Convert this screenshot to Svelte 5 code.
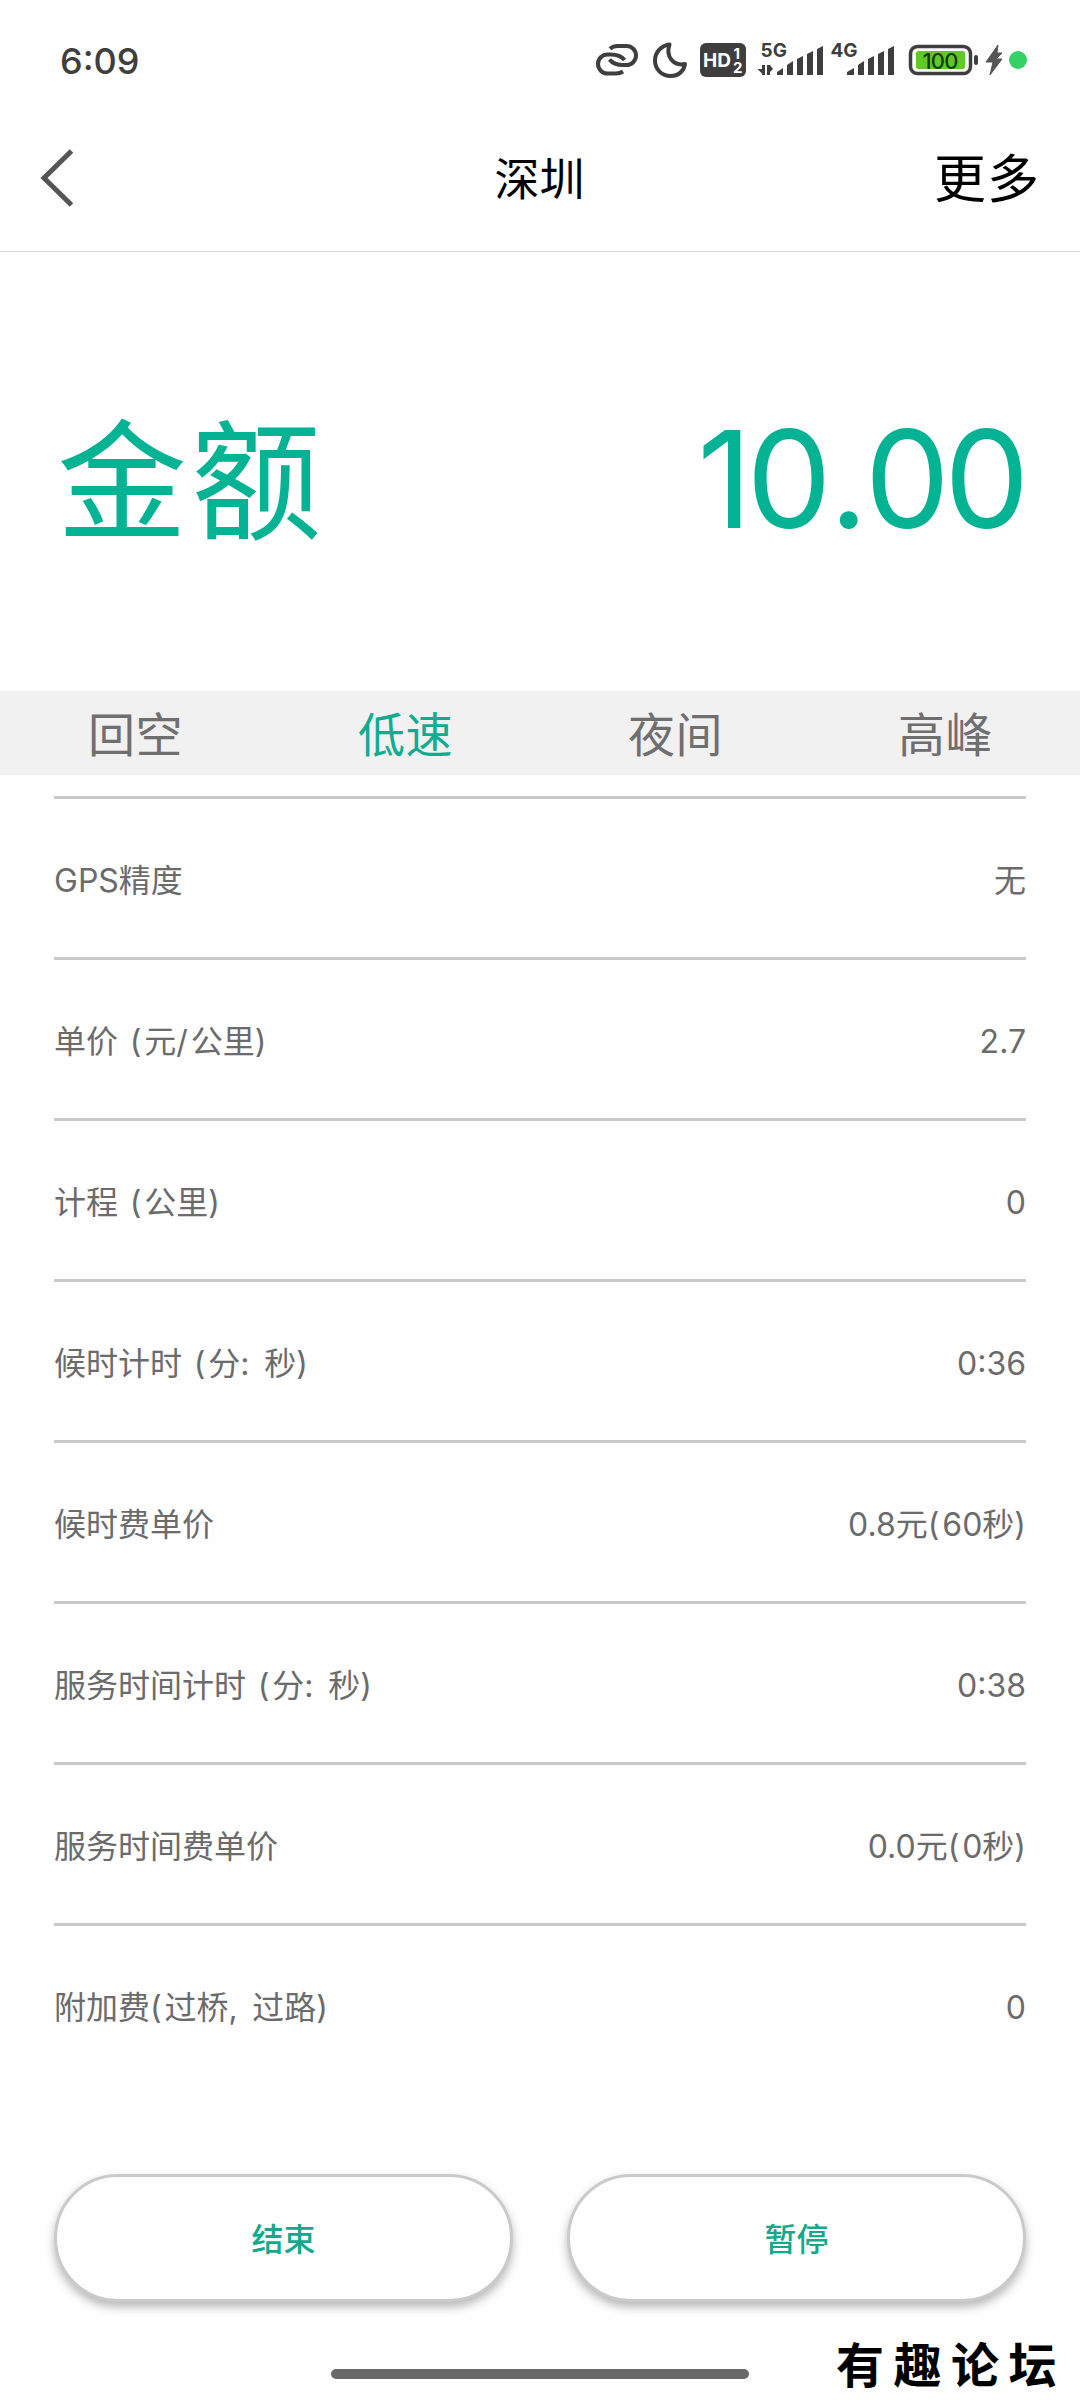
<script>
  let active = "低速";

  const tabs = ["回空", "低速", "夜间", "高峰"];

  const rows = [
    { label: "GPS精度", value: "无" },
    { label: "单价 (元/公里)", value: "2.7" },
    { label: "计程 (公里)", value: "0" },
    { label: "候时计时 (分: 秒)", value: "0:36" },
    { label: "候时费单价", value: "0.8元(60秒)" },
    { label: "服务时间计时 (分: 秒)", value: "0:38" },
    { label: "服务时间费单价", value: "0.0元(0秒)" },
    { label: "附加费(过桥, 过路)", value: "0" },
  ];

  // punctuation is set a bit looser than the rest of the text
  function split(text) {
    return text.split(/([ (),/]+|: )/).filter((part) => part !== "");
  }
</script>

{#snippet spaced(text)}
  <span class="text">{#each split(text) as part}<span class:punct={/^[ (),/:]/.test(part)}>{part}</span>{/each}</span>
{/snippet}

<div class="screen">
  <div class="status">
    <span class="clock">6:09</span>
    <svg class="icons" width="440" height="50" viewBox="590 35 440 50">
      <!-- link -->
      <g fill="none" stroke="#3e3e3e" stroke-width="4">
        <path d="M610 48.800Q613 46 618 46h8.500a9.500 9.500 0 0 1 0 19h-3c-6 0-11-1.500-14-5.500" />
        <path d="M623 71.500Q620 73.500 616 73.500h-8.500a9.500 9.500 0 0 1 0-19h3c6 0 11 1.500 14 5.500" />
      </g>
      <path d="M669.500 44.500c-8.500 1-14.500 8-14.500 16c0 9 7 15.500 15.500 15.500c8 0 13.500-5 14.500-12c-12 2.500-19.500-8-15.500-19.500z" fill="none" stroke="#3e3e3e" stroke-width="4" stroke-linejoin="round" />
      <!-- HD -->
      <rect x="700" y="43" width="46" height="34" rx="6" fill="#3e3e3e" />
      <text x="703" y="67" class="hd">HD</text>
      <text x="733.500" y="58.500" class="sim">1</text>
      <text x="733" y="73" class="sim">2</text>
      <!-- signals -->
      <text x="760.500" y="57" class="net">5G</text>
      <path d="M757.500 69h6v6zM762 65h3v10h-3zM767 65h3v10h-3zM770 65v7l3-3z" fill="#3e3e3e" />
      <g fill="#3e3e3e">
        <path d="M777 75v-3l6-4v7zM787 75v-10l6-4v14zM797 75v-16l6-3v19zM807 75v-21l6-3v24zM817 75v-26l6-3v29z" />
        <path d="M847 75v-3l7-4v7zM858 75v-10l6-4v14zM868 75v-16l6-3v19zM878 75v-21l6-3v24zM888 75v-26l6-3v29z" />
      </g>
      <text x="830.500" y="57" class="net">4G</text>
      <!-- battery -->
      <rect x="910.500" y="46.500" width="60" height="27" rx="7" fill="none" stroke="#3e3e3e" stroke-width="3.500" />
      <rect x="916" y="51" width="49" height="18" rx="2.500" fill="#62c828" />
      <text x="940" y="68.500" class="level">100</text>
      <rect x="974" y="55" width="4" height="10" rx="2" fill="#3e3e3e" />
      <path d="M998 45l-12 17h7l-3 13l12-16h-6l6-6h-5z" fill="#555" stroke="#555" />
      <circle cx="1018" cy="60" r="9" fill="#34d266" />
    </svg>
  </div>

  <div class="header">
    <svg class="back" width="36" height="62" viewBox="0 0 36 62">
      <path d="M32.500 4L5 31L32.500 58" fill="none" stroke="#555" stroke-width="5" />
    </svg>
    <div class="title">深圳</div>
    <div class="more">更多</div>
  </div>

  <div class="amount">
    <span class="name">金额</span>
    <span class="price">10<span class="dot">.</span>00</span>
  </div>

  <div class="tabs">
    {#each tabs as tab}
      <button class="tab" class:active={tab === active} onclick={() => (active = tab)}>{tab}</button>
    {/each}
  </div>

  <div class="list">
    {#each rows as row}
      <div class="row">
        {@render spaced(row.label)}
        {@render spaced(row.value)}
      </div>
    {/each}
  </div>

  <div class="actions">
    <button class="action">结束</button>
    <button class="action">暂停</button>
  </div>

  <div class="home"></div>
  <div class="watermark">有趣论坛</div>
</div>

<style>
  :global(body) {
    background: #fefefe;
  }
  .screen {
    position: relative;
    width: 1080px;
    height: 2400px;
    overflow: hidden;
    display: flex;
    flex-direction: column;
    background: #fefefe;
    font-family: Inter, "Noto Sans CJK SC", sans-serif;
    color: #6b6b6b;
  }
  button {
    font-family: inherit;
    padding: 0;
    border: none;
    background: none;
  }
  .status {
    display: flex;
    justify-content: space-between;
    align-items: center;
    height: 120px;
    box-sizing: border-box;
    padding: 0 50px 0 60px;
  }
  .clock {
    padding-top: 1px;
    font-size: 36px;
    font-weight: 500;
    color: #3e3e3e;
  }
  .hd {
    font-size: 19px;
    font-weight: 700;
    fill: #fff;
  }
  .sim {
    font-size: 15px;
    font-weight: 700;
    fill: #fff;
  }
  .net {
    font-size: 19px;
    font-weight: 700;
    fill: #3e3e3e;
  }
  .level {
    font-size: 22px;
    font-weight: 500;
    letter-spacing: -0.8px;
    text-anchor: middle;
    fill: #143c08;
  }
  .header {
    display: grid;
    grid-template-columns: 1fr auto 1fr;
    align-items: center;
    height: 132px;
    box-sizing: border-box;
    padding: 0 40px 16px 39px;
    border-bottom: 1px solid #dadada;
    color: #000;
  }
  .title {
    padding-top: 5px;
    font-size: 45px;
    line-height: 64px;
  }
  .more {
    padding-top: 5px;
    font-size: 52px;
    line-height: 64px;
    letter-spacing: 1px;
    text-align: right;
  }
  .amount {
    display: flex;
    justify-content: space-between;
    align-items: center;
    height: 439px;
    box-sizing: border-box;
    padding: 0 56px 0 57px;
    color: #04b294;
  }
  .name {
    font-size: 130px;
    letter-spacing: 4px;
  }
  .price {
    padding-top: 15px;
    font-size: 135px;
    letter-spacing: -5.5px;
  }
  .dot {
    margin: 0 2px 0 3px;
  }
  .tabs {
    display: flex;
    height: 84px;
    background: #f1f1f1;
  }
  .tab {
    flex: 1;
    padding-top: 3px;
    font-size: 47px;
    line-height: 81px;
    letter-spacing: 0.5px;
    text-indent: 1px;
    color: #6f6f6f;
  }
  .tab.active {
    color: #10ac90;
  }
  .list {
    margin: 21px 54px 0;
  }
  .row {
    display: flex;
    justify-content: space-between;
    align-items: center;
    height: 161px;
    box-sizing: border-box;
    padding-top: 6px;
    border-top: 3px solid #cacaca;
    font-size: 32px;
  }
  .text {
    white-space: pre;
    line-height: 48px;
  }
  .punct {
    letter-spacing: 2.8px;
  }
  .punct:last-child {
    letter-spacing: 0;
  }
  .actions {
    display: flex;
    gap: 54px;
    margin: 90px 54px 0;
  }
  .action {
    flex: 1;
    height: 128px;
    box-sizing: border-box;
    padding-bottom: 2px;
    border: 3px solid #cacaca;
    border-radius: 64px;
    background: #fefefe;
    box-shadow: 0 5px 10px rgba(0, 0, 0, 0.28);
    font-size: 32px;
    font-weight: 500;
    color: #14a88c;
  }
  .home {
    width: 418px;
    height: 10px;
    margin: 67px auto 0;
    border-radius: 5px;
    background: #6a6a6a;
  }
  /* forum stamp lying over the bottom corner */
  .watermark {
    position: absolute;
    right: 14px;
    bottom: 0;
    font-size: 48px;
    line-height: 68px;
    font-weight: 700;
    letter-spacing: 9.5px;
    color: #000;
  }
</style>
